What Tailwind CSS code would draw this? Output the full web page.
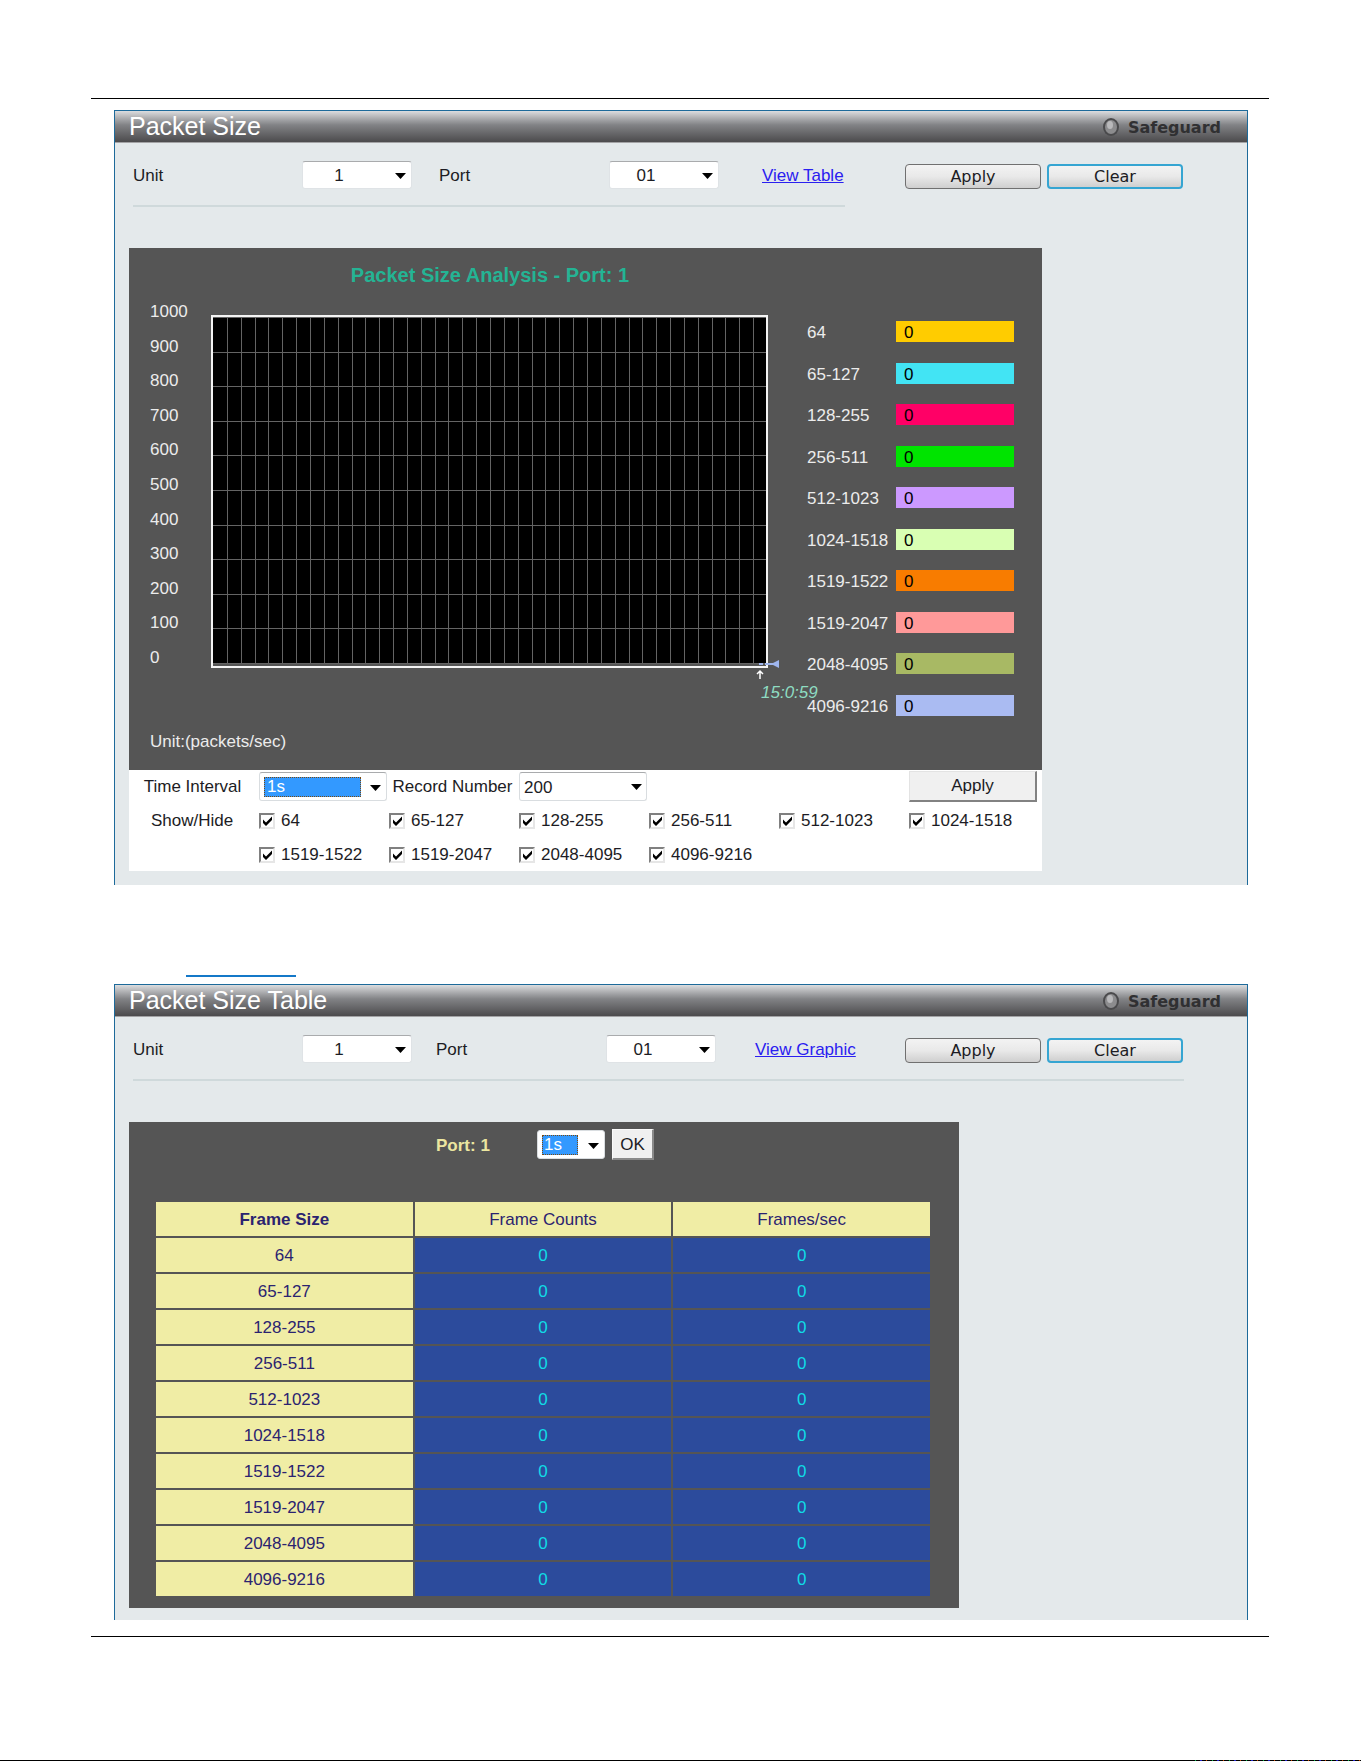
<!DOCTYPE html>
<html lang="en">
<head>
  <meta charset="UTF-8" />
  <title>Packet Size</title>
  <script src="https://cdn.jsdelivr.net/npm/@tailwindcss/browser@4"></script>
</head>
<body class="min-h-screen flex flex-col bg-white text-[#1c1c24] font-['Liberation_Sans',Arial,sans-serif] text-[17px] leading-5">
  <main class="mt-[98px] ml-[91px] mr-[92px] pl-[23px] pr-[21px] pt-[11px] pb-4 border-y border-black">

    <!-- Packet Size -->
    <section class="border border-b-0 border-[#1d6a9a] bg-[#e4e9eb] pb-[14px]">
      <header class="h-8 flex items-center justify-between pl-[14px] pr-[26px] border-b border-[#a3a3a5] bg-linear-to-b from-[#dcdddf] via-[#828386] via-45% to-[#4c4b4d]">
        <h1 class="pb-[2px] text-[25px] leading-7 text-white">Packet Size</h1>
        <div class="flex items-center gap-2 text-[#303032]">
          <svg width="18" height="20" viewBox="0 0 18 20"><ellipse cx="9" cy="10" rx="8" ry="9" fill="#4a4a4c"/><ellipse cx="9" cy="10" rx="6" ry="7" fill="#8c8c8e"/><ellipse cx="8" cy="8" rx="3" ry="4" fill="#b9b9bb"/></svg>
          <span class="pt-[2px] font-['DejaVu_Sans',sans-serif] font-bold text-[16px]">Safeguard</span>
        </div>
      </header>

      <form class="pt-[18px] px-[18px] flex items-center">
        <label for="unit1" class="w-[169px] pt-[2px]">Unit</label>
        <span class="relative w-[110px]">
          <select id="unit1" class="appearance-none w-full h-7 bg-white border border-[#dfe3e6] border-t-[#a9abad] rounded-[3px] text-center pt-[2px] pl-1 pr-10"><option>1</option></select>
          <svg class="absolute right-[6px] top-[12px] pointer-events-none" width="11" height="6" viewBox="0 0 11 6"><path d="M0 0h11L5.500 6z"/></svg>
        </span>
        <label for="port1" class="w-[170px] ml-[27px] pt-[2px]">Port</label>
        <span class="relative w-[110px]">
          <select id="port1" class="appearance-none w-full h-7 bg-white border border-[#dfe3e6] border-t-[#a9abad] rounded-[3px] text-center pt-[2px] pl-1 pr-10"><option>01</option></select>
          <svg class="absolute right-[6px] top-[12px] pointer-events-none" width="11" height="6" viewBox="0 0 11 6"><path d="M0 0h11L5.500 6z"/></svg>
        </span>
        <span class="w-[143px] ml-[43px] pt-[2px]"><a href="#table" class="text-[#2a20f0] underline">View Table</a></span>
        <button type="button" class="self-end w-[136px] h-[25px] border border-[#707070] rounded-[4px] bg-linear-to-b from-[#f3f3f3] via-[#e9e9e9] via-50% to-[#cfcfcf] font-['DejaVu_Sans',sans-serif] text-[16px]">Apply</button>
        <button type="button" class="self-end ml-[6px] w-[136px] h-[25px] border-2 border-[#35a5d2] rounded-[4px] bg-linear-to-b from-[#f3f3f3] via-[#e9e9e9] via-50% to-[#cfcfcf] font-['DejaVu_Sans',sans-serif] text-[16px]">Clear</button>
      </form>
      <div class="mt-4 ml-[18px] w-[712px] h-[2px] bg-[#cfd9db]"></div>

      <div class="mt-[41px] ml-[14px] w-[913px]">
        <div class="bg-[#555] pt-[15px] pb-[18px] pl-[21px] text-[#ececec]">
          <h2 class="w-[680px] text-center text-xl leading-6 font-bold text-[#24b494]">Packet Size Analysis - Port: 1</h2>
          <div class="mt-[14px] flex items-start">
            <div id="scale" class="mt-px w-[61px] h-[366px] flex flex-col justify-between"></div>
            <svg class="mt-[14px] overflow-visible" width="557" height="353" viewBox="0 0 557 353">
              <rect x="1" y="1" width="555" height="351" fill="#555" stroke="#f4f4f4" stroke-width="2"/>
              <rect x="2" y="3" width="553" height="346" fill="#000"/>
              <path id="grid" fill="none" stroke="#646464" stroke-width="1" shape-rendering="crispEdges"/>
              <!-- current position marker -->
              <path d="M548 349h4M554 349h3M557 349h6" stroke="#9fb6ee" stroke-width="2"/>
              <path d="M562 348l2-1 4-2v8l-4-2-2-1z" fill="#9fb6ee"/>
              <path d="M549 364v-8M546 359l3-3 3 3" fill="none" stroke="#fff" stroke-width="1.500"/>
              <text x="550" y="383" font-size="17" font-style="italic" fill="#8edcc2">15:0:59</text>
            </svg>
            <ul id="legend" class="relative mt-5 ml-[39px] h-[395px] flex flex-col justify-between"></ul>
          </div>
          <p class="mt-4">Unit:(packets/sec)</p>
        </div>

        <form id="controls" class="bg-white grid grid-cols-[repeat(7,130px)] grid-rows-[33px_35px_33px] items-center">
          <label for="interval" class="text-center pr-[3px]">Time Interval</label>
          <span class="relative w-32 h-[29px] p-1 border border-[#d9dde0] border-t-[#a9abad] rounded-[3px] bg-white">
            <select id="interval" class="appearance-none block w-[97px] h-[20px] leading-[18px] pl-[2px] bg-[#3399ff] text-white border border-dotted border-[#7a4a10]"><option>1s</option></select>
            <svg class="absolute right-[5px] top-[12px] pointer-events-none" width="11" height="6" viewBox="0 0 11 6"><path d="M0 0h11L5.500 6z"/></svg>
          </span>
          <label for="record" class="text-center pr-[3px]">Record Number</label>
          <span class="relative w-32">
            <select id="record" class="appearance-none block w-full h-[29px] pl-1 pt-[2px] border border-[#d9dde0] border-t-[#a9abad] rounded-[3px] bg-white"><option>200</option></select>
            <svg class="absolute right-[5px] top-[12px] pointer-events-none" width="11" height="6" viewBox="0 0 11 6"><path d="M0 0h11L5.500 6z"/></svg>
          </span>
          <button type="button" class="col-start-7 w-32 h-[31px] bg-[#f0f0f0] border border-r-2 border-b-2 border-[#e3e3e3] border-r-[#828282] border-b-[#828282]">Apply</button>
          <span class="row-start-2 text-center pr-1">Show/Hide</span>
        </form>
      </div>
    </section>

    <div class="mt-[90px] ml-[72px] w-[110px] h-[2px] bg-[#1478c8]"></div>

    <!-- Packet Size Table -->
    <section id="table" class="mt-[7px] border border-b-0 border-[#1d6a9a] bg-[#e4e9eb] pb-3">
      <header class="h-8 flex items-center justify-between pl-[14px] pr-[26px] border-b border-[#a3a3a5] bg-linear-to-b from-[#dcdddf] via-[#828386] via-45% to-[#4c4b4d]">
        <h1 class="pb-[2px] text-[25px] leading-7 text-white">Packet Size Table</h1>
        <div class="flex items-center gap-2 text-[#303032]">
          <svg width="18" height="20" viewBox="0 0 18 20"><ellipse cx="9" cy="10" rx="8" ry="9" fill="#4a4a4c"/><ellipse cx="9" cy="10" rx="6" ry="7" fill="#8c8c8e"/><ellipse cx="8" cy="8" rx="3" ry="4" fill="#b9b9bb"/></svg>
          <span class="pt-[2px] font-['DejaVu_Sans',sans-serif] font-bold text-[16px]">Safeguard</span>
        </div>
      </header>

      <form class="pt-[18px] px-[18px] flex items-center">
        <label for="unit2" class="w-[169px] pt-[2px]">Unit</label>
        <span class="relative w-[110px]">
          <select id="unit2" class="appearance-none w-full h-7 bg-white border border-[#dfe3e6] border-t-[#a9abad] rounded-[3px] text-center pt-[2px] pl-1 pr-10"><option>1</option></select>
          <svg class="absolute right-[6px] top-[12px] pointer-events-none" width="11" height="6" viewBox="0 0 11 6"><path d="M0 0h11L5.500 6z"/></svg>
        </span>
        <label for="port2" class="w-[170px] ml-6 pt-[2px]">Port</label>
        <span class="relative w-[110px]">
          <select id="port2" class="appearance-none w-full h-7 bg-white border border-[#dfe3e6] border-t-[#a9abad] rounded-[3px] text-center pt-[2px] pl-1 pr-10"><option>01</option></select>
          <svg class="absolute right-[6px] top-[12px] pointer-events-none" width="11" height="6" viewBox="0 0 11 6"><path d="M0 0h11L5.500 6z"/></svg>
        </span>
        <span class="w-[150px] ml-[39px] pt-[2px]"><a href="#" class="text-[#2a20f0] underline">View Graphic</a></span>
        <button type="button" class="self-end w-[136px] h-[25px] border border-[#707070] rounded-[4px] bg-linear-to-b from-[#f3f3f3] via-[#e9e9e9] via-50% to-[#cfcfcf] font-['DejaVu_Sans',sans-serif] text-[16px]">Apply</button>
        <button type="button" class="self-end ml-[6px] w-[136px] h-[25px] border-2 border-[#35a5d2] rounded-[4px] bg-linear-to-b from-[#f3f3f3] via-[#e9e9e9] via-50% to-[#cfcfcf] font-['DejaVu_Sans',sans-serif] text-[16px]">Clear</button>
      </form>
      <div class="mt-4 ml-[18px] w-[1051px] h-[2px] bg-[#cfd9db]"></div>

      <div class="mt-[41px] ml-[14px] w-[830px] bg-[#555] pt-[7px] pb-[10px] px-[25px]">
        <form class="pl-[282px] flex items-center">
          <label for="refresh" class="w-[101px] pt-[2px] font-bold text-[#ece6a0]">Port: 1</label>
          <span class="relative w-[68px] h-[29px] p-1 rounded-[3px] border border-[#d9dde0] bg-white">
            <select id="refresh" class="appearance-none block w-9 h-[20px] leading-[18px] pl-[1px] bg-[#3399ff] text-white border border-dotted border-[#7a4a10]"><option>1s</option></select>
            <svg class="absolute right-[5px] top-[12px] pointer-events-none" width="11" height="6" viewBox="0 0 11 6"><path d="M0 0h11L5.500 6z"/></svg>
          </span>
          <button type="button" class="ml-[7px] w-[42px] h-[31px] pt-[2px] bg-[#f0f0f0] border border-r-2 border-b-2 border-[#fafafa] border-r-[#8a8a8a] border-b-[#8a8a8a]">OK</button>
        </form>
        <table class="mt-10 w-[778px] table-fixed border-separate border-spacing-[2px] text-center">
          <thead>
            <tr class="h-[34px] bg-[#f0eda5] text-[#2b2370]">
              <th class="pt-[2px] font-bold">Frame Size</th>
              <th class="pt-[2px] font-normal">Frame Counts</th>
              <th class="pt-[2px] font-normal">Frames/sec</th>
            </tr>
          </thead>
          <tbody id="rows"></tbody>
        </table>
      </div>
    </section>
  </main>

  <footer class="mt-auto h-px bg-black flex justify-end">
    <div class="w-[171px] h-px bg-[repeating-linear-gradient(90deg,#000_0_5px,#0b4_5px_6px,#000_6px_10px,#22c_10px_12px,#000_12px_16px,#c40_16px_17px)]"></div>
  </footer>

  <script>
    const sizes = [
      { name: "64", color: "#ffcc00" },
      { name: "65-127", color: "#42e4f4" },
      { name: "128-255", color: "#ff0066" },
      { name: "256-511", color: "#00e400" },
      { name: "512-1023", color: "#cc99ff" },
      { name: "1024-1518", color: "#d9ffb3" },
      { name: "1519-1522", color: "#f87c00" },
      { name: "1519-2047", color: "#ff9999" },
      { name: "2048-4095", color: "#a8b964" },
      { name: "4096-9216", color: "#aabbf2" }
    ];

    // Chart scale and grid
    const scale = document.getElementById("scale");
    for (let v = 1000; v >= 0; v -= 100) {
      scale.insertAdjacentHTML("beforeend", `<span>${v}</span>`);
    }

    let d = "";
    for (let i = 1; i < 40; i++) d += `M${Math.round(2 + i * 13.85)}.5 3V349`;
    for (let i = 0; i <= 10; i++) d += `M2 ${Math.round(2 + i * 34.6)}.5H555`;
    document.getElementById("grid").setAttribute("d", d);

    // Legend, show/hide boxes and table rows
    const legend = document.getElementById("legend");
    const controls = document.getElementById("controls");
    const rows = document.getElementById("rows");

    sizes.forEach((s, i) => {
      legend.insertAdjacentHTML("beforeend", `
        <li class="flex h-[21px] leading-6">
          <span class="w-[89px]">${s.name}</span>
          <span class="w-[118px] h-[21px] pl-2 text-black" style="background:${s.color}">0</span>
        </li>`);

      // second line of boxes starts under the first box
      controls.insertAdjacentHTML("beforeend", `
        <label class="relative flex items-center gap-[6px] ${i < 6 ? "row-start-2" : "row-start-3"} ${i === 6 ? "col-start-2" : i === 7 ? "col-start-3" : i === 8 ? "col-start-4" : i === 9 ? "col-start-5" : ""}">
          <input type="checkbox" checked class="peer appearance-none size-4 bg-white border-2 border-[#808080] border-r-[#e6e6e6] border-b-[#e6e6e6]" />
          <svg class="absolute left-[3px] hidden peer-checked:block" width="11" height="10" viewBox="0 0 11 10"><path d="M1 3.500l3 3L10 0.500v3.500L4 10 1 7z"/></svg>
          ${s.name}
        </label>`);

      rows.insertAdjacentHTML("beforeend", `
        <tr class="h-[34px] bg-[#2c4b9c] text-[#10dce6]">
          <td class="pt-[2px] bg-[#f0eda5] text-[#2b2370]">${s.name}</td>
          <td class="pt-[2px]">0</td>
          <td class="pt-[2px]">0</td>
        </tr>`);
    });
  </script>
</body>
</html>
